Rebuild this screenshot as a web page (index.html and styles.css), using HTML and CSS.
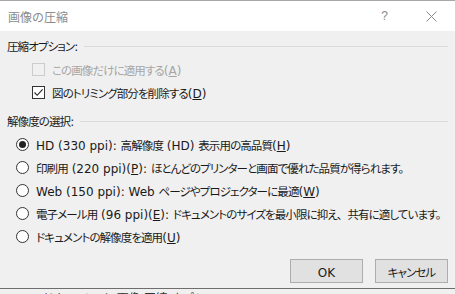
FILE: index.html
```html
<!DOCTYPE html>
<html lang="ja">

<head>
    <meta charset="UTF-8">
    <title>画像の圧縮</title>
    <link rel="stylesheet" href="styles.css">
</head>

<body>
    <div class="dialog">
        <!-- Title bar -->
        <div class="titlebar">
            <span class="title">画像の圧縮</span>
            <div class="controls">
                <span class="help">?</span>
                <svg class="close" width="11" height="11" viewBox="0 0 11 11">
                    <path d="M0.5 0.5 L10.5 10.5 M10.5 0.5 L0.5 10.5" stroke="#8a8a8a" stroke-width="1" fill="none"/>
                </svg>
            </div>
        </div>

        <div class="content">
            <!-- Compression options -->
            <div class="group-head">
                <span class="txt">圧縮オプション<span class="en">:</span></span>
                <div class="rule"></div>
            </div>
            <div class="checks">
                <label class="row disabled">
                    <span class="checkbox"></span>
                    <span class="txt">この画像だけに適用する<span class="en">(<u>A</u>)</span></span>
                </label>
                <label class="row">
                    <span class="checkbox">
                        <svg width="11" height="11" viewBox="0 0 11 11">
                            <path d="M1.5 5.5 L4.2 8.3 L9.6 2.4" stroke="#222" stroke-width="1.1" fill="none"/>
                        </svg>
                    </span>
                    <span class="txt">図のトリミング部分を削除する<span class="en">(<u>D</u>)</span></span>
                </label>
            </div>

            <!-- Resolution -->
            <div class="group-head second">
                <span class="txt">解像度の選択<span class="en">:</span></span>
                <div class="rule"></div>
            </div>
            <div class="radios">
                <label class="row"><span class="radio on"></span><span class="txt"><span class="en">HD (330 ppi): </span>高解像度<span class="en"> (HD) </span>表示用の高品質<span class="en">(<u>H</u>)</span></span></label>
                <label class="row"><span class="radio"></span><span class="txt">印刷用<span class="en"> (220 ppi)(<u>P</u>): </span>ほとんどのプリンターと画面で優れた品質が得られます。</span></label>
                <label class="row"><span class="radio"></span><span class="txt"><span class="en">Web (150 ppi): Web </span>ページやプロジェクターに最適<span class="en">(<u>W</u>)</span></span></label>
                <label class="row"><span class="radio"></span><span class="txt">電子メール用<span class="en"> (96 ppi)(<u>E</u>): </span>ドキュメントのサイズを最小限に抑え<span class="wide">、</span>共有に適しています。</span></label>
                <label class="row"><span class="radio"></span><span class="txt">ドキュメントの解像度を適用<span class="en">(<u>U</u>)</span></span></label>
            </div>

            <div class="buttons">
                <button class="btn"><span class="en">OK</span></button>
                <button class="btn"><span class="txt">キャンセル</span></button>
            </div>
        </div>
    </div>
    <div class="under">
        <span>ドキュメント 画像 圧縮 オプション</span>
    </div>
</body>

</html>
```

FILE: styles.css
```css
* {
    margin: 0;
    padding: 0;
    box-sizing: border-box;
}

body {
    width: 455px;
    height: 294px;
    overflow: hidden;
    background: #f0f0f0;
    font-family: "Noto Sans CJK JP", sans-serif;
    font-size: 12px;
    color: #1a1a1a;
}

/* CJK runs are narrow in the original UI font */
.txt {
    font-size: 11.5px;
    font-feature-settings: "palt";
    letter-spacing: -0.9px;
}

.en {
    font-family: "DejaVu Sans", sans-serif;
    font-size: 12px;
    letter-spacing: 0;
}

.wide {
    font-feature-settings: normal;
}

.dialog {
    border-top: 1px solid #a8a8a8;
    border-bottom: 1px solid #6e6e6e;
    background: #f0f0f0;
}

/* Title bar */
.titlebar {
    height: 30px;
    background: #fff;
    display: flex;
    align-items: center;
    justify-content: space-between;
    padding-left: 8px;
}

.title {
    color: #8c8c8c;
}

.controls {
    display: flex;
    align-items: center;
    gap: 38px;
    padding-right: 18px;
}

.help {
    color: #8a8a8a;
    font-family: "Liberation Sans", sans-serif;
    font-size: 12px;
}

/* Content */
.content {
    padding: 7px 7px 4px 7px;
}

.group-head {
    display: flex;
    align-items: center;
    height: 16px;
    gap: 6px;
}

.group-head .rule {
    flex: 1;
    height: 1px;
    background: #dadada;
}

.group-head.second {
    margin-top: 9px;
}

.row {
    display: flex;
    align-items: center;
    height: 23px;
    gap: 7px;
    white-space: nowrap;
}

.checks {
    margin-top: 4px;
    padding-left: 25px;
}

.radios {
    margin-top: 4px;
    padding-left: 9px;
}

.disabled {
    color: #a6a6a6;
}

.checkbox {
    flex-shrink: 0;
    width: 13px;
    height: 13px;
    border: 1px solid #333;
    background: #fff;
    display: flex;
    align-items: center;
    justify-content: center;
}

.disabled .checkbox {
    border-color: #cccccc;
    background: transparent;
}

.radio {
    flex-shrink: 0;
    width: 13px;
    height: 13px;
    border: 1px solid #333;
    border-radius: 50%;
    background: #fff;
    display: flex;
    align-items: center;
    justify-content: center;
}

.radio.on::after {
    content: "";
    width: 7px;
    height: 7px;
    border-radius: 50%;
    background: #222;
}

/* Buttons */
.buttons {
    display: flex;
    justify-content: flex-end;
    gap: 12px;
    margin-top: 11px;
    padding-bottom: 1px;
}

.btn {
    width: 73px;
    height: 24px;
    border: 1px solid #adadad;
    background: #e1e1e1;
    font-family: inherit;
    color: #1a1a1a;
}

/* Window beneath the dialog */
.under {
    height: 5px;
    overflow: hidden;
    padding-left: 42px;
    padding-top: 3px;
    color: #333;
    font-size: 12px;
    line-height: 12px;
}
```
